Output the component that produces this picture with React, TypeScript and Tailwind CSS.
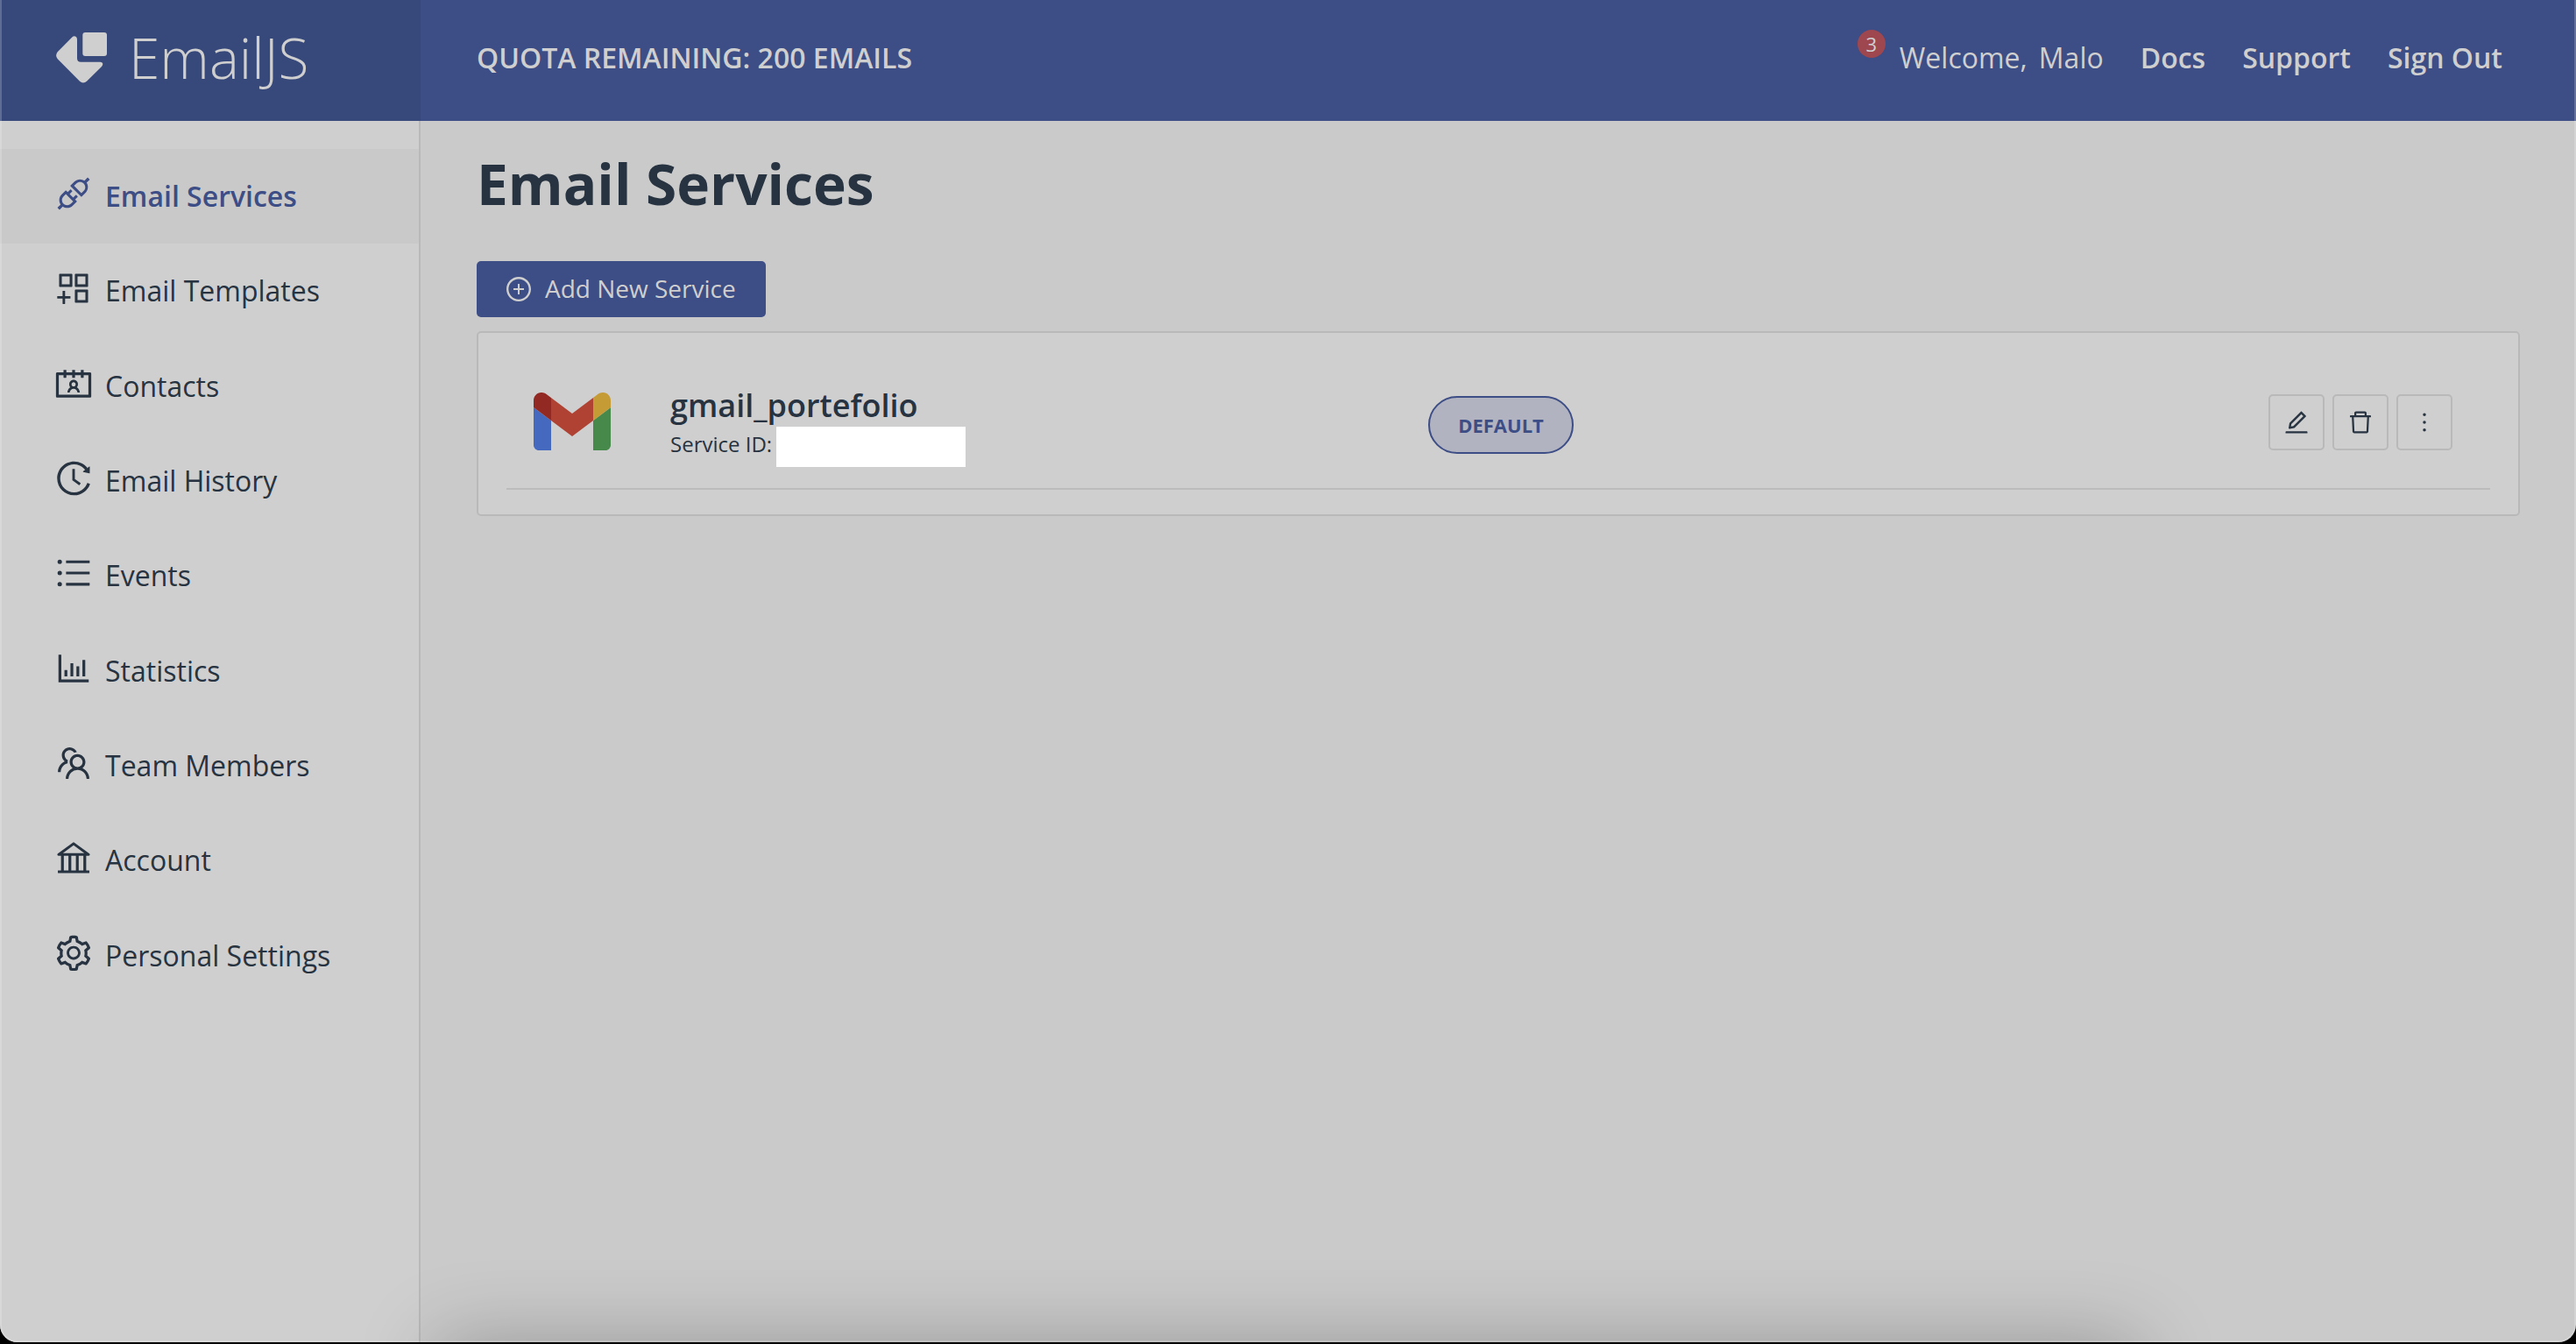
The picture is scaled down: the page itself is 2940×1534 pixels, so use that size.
import React from "react";
import type { IconType } from "react-icons";
import {
  AiOutlineApi,
  AiOutlineAppstoreAdd,
  AiOutlineBank,
  AiOutlineBarChart,
  AiOutlineContacts,
  AiOutlineDelete,
  AiOutlineEdit,
  AiOutlineHistory,
  AiOutlineMore,
  AiOutlinePlusCircle,
  AiOutlineSetting,
  AiOutlineTeam,
  AiOutlineUnorderedList,
} from "react-icons/ai";

const navItems: { label: string; Icon: IconType }[] = [
  { label: "Email Services", Icon: AiOutlineApi },
  { label: "Email Templates", Icon: AiOutlineAppstoreAdd },
  { label: "Contacts", Icon: AiOutlineContacts },
  { label: "Email History", Icon: AiOutlineHistory },
  { label: "Events", Icon: AiOutlineUnorderedList },
  { label: "Statistics", Icon: AiOutlineBarChart },
  { label: "Team Members", Icon: AiOutlineTeam },
  { label: "Account", Icon: AiOutlineBank },
  { label: "Personal Settings", Icon: AiOutlineSetting },
];

function Logo() {
  return (
    <svg viewBox="0 0 58 58" className="size-[58px] shrink-0" fill="#cfcfcf" aria-hidden="true">
      <rect x="30.300" y="0" width="27.700" height="27" rx="3" />
      <path d="M18.500 5.300Q20.500 3.700 22.500 4.800Q24 5.800 24 8V29.500Q24 33.700 28.200 33.700H50.500Q52.800 33.700 53.300 35.700Q53.500 37.500 52 39L35 55.800Q31 59.300 27 55.800L1.700 30.300Q-1.500 26.300 1.700 22.300Z" />
    </svg>
  );
}

function GmailLogo() {
  return (
    <svg viewBox="0 0 88 66" className="mb-0.5 h-[66px] w-[88px] shrink-0" aria-label="Gmail" role="img">
      <path fill="#4469be" d="M6 66h14V32L0 17v43c0 3.320 2.690 6 6 6" />
      <path fill="#47894b" d="M68 66h14c3.320 0 6-2.690 6-6V17L68 32" />
      <path fill="#c49b35" d="M68 6v26l20-15V9c0-7.420-8.470-11.650-14.400-7.200" />
      <path fill="#b04234" d="M20 32V6l24 18L68 6v26L44 50" />
      <path fill="#922922" d="M0 9v8l20 15V6l-5.600-4.200C8.470-2.650 0 1.580 0 9" />
    </svg>
  );
}

function ActionButton({ label, Icon }: { label: string; Icon: IconType }) {
  return (
    <button
      type="button"
      aria-label={label}
      className="flex size-16 items-center justify-center rounded-[5px] border-2 border-[#b9b9b9]"
    >
      <Icon className="size-8 shrink-0" aria-hidden="true" />
    </button>
  );
}

export default function App() {
  return (
    <div className="min-h-screen bg-black pb-[2px] font-['Open_Sans',sans-serif] text-[32px] leading-[44px] text-[#273340]">
      <div className="relative flex min-h-[calc(100vh-2px)] flex-col overflow-hidden rounded-b-[20px] bg-[#cacaca]">
        <header className="flex h-[138px] bg-[#3d4d85] text-[#cfcfcf]">
          <a href="#" className="flex w-[480px] shrink-0 items-center gap-[25px] bg-[#37487b] pb-1.5 pl-16">
            <Logo />
            <span className="text-[64px] leading-[88px] font-light">EmailJS</span>
          </a>
          <div className="flex flex-1 items-center justify-between pr-[84px] pb-1.5 pl-16">
            <p className="font-semibold">QUOTA REMAINING: 200 EMAILS</p>
            <nav className="flex items-center gap-[42px] font-semibold">
              <a href="#" className="relative flex gap-[13px] font-normal">
                <span className="absolute -top-2.5 right-full mr-4 flex size-8 items-center justify-center rounded-full bg-[#9e474e] text-[22px]">
                  3
                </span>
                <span>Welcome,</span>
                <span>Malo</span>
              </a>
              <a href="#">Docs</a>
              <a href="#">Support</a>
              <a href="#">Sign Out</a>
            </nav>
          </div>
        </header>

        <div className="flex flex-1">
          <aside className="w-[480px] shrink-0 border-r-2 border-[#b9b9b9] bg-[#cfcfcf] pt-8">
            <nav className="grid h-[975px] grid-rows-9">
              {navItems.map(({ label, Icon }, i) => (
                <a
                  key={label}
                  href="#"
                  className={
                    i === 0
                      ? "flex items-center gap-[13px] bg-[#c9c9c9] pl-[61px] font-semibold text-[#3d4d85]"
                      : "flex items-center gap-[13px] pl-[61px]"
                  }
                >
                  <Icon className="mb-1.5 size-[46px] shrink-0" aria-hidden="true" />
                  <span>{label}</span>
                </a>
              ))}
            </nav>
          </aside>

          <main className="flex-1 px-16 pt-7">
            <h1 className="text-[64px] leading-[88px] font-bold">Email Services</h1>
            <button
              type="button"
              className="mt-11 flex h-16 items-center gap-3.5 rounded-[5px] bg-[#3d4d85] pr-[34px] pl-8 text-[28px] text-[#cfcfcf]"
            >
              <AiOutlinePlusCircle className="size-8 shrink-0" aria-hidden="true" />
              <span className="pb-0.5">Add New Service</span>
            </button>

            <section className="mt-4 h-[211px] rounded-[5px] border-2 border-[#b9b9b9] bg-[#cfcfcf] px-8">
              <div className="flex h-[179px] items-center border-b-2 border-[#bcbcbc] pt-[26px] pr-[43px] pl-[31px]">
                <GmailLogo />
                <div className="ml-[68px] w-[865px] pt-2">
                  <h2 className="text-4xl leading-[48px] font-semibold">gmail_portefolio</h2>
                  <p className="flex items-start gap-[5px] text-2xl leading-10">
                    Service ID:
                    <span className="h-[46px] w-[216px] bg-white" />
                  </p>
                </div>
                <span className="mt-1.5 flex h-[66px] w-[166px] items-center justify-center rounded-full border-2 border-[#3d4d85] bg-[#b1b3c0] text-[22px] font-bold text-[#3d4d85]">
                  DEFAULT
                </span>
                <div className="ml-auto flex gap-[9px]">
                  <ActionButton label="Edit service" Icon={AiOutlineEdit} />
                  <ActionButton label="Delete service" Icon={AiOutlineDelete} />
                  <ActionButton label="More actions" Icon={AiOutlineMore} />
                </div>
              </div>
            </section>
          </main>
        </div>

        <div className="pointer-events-none absolute right-[500px] -bottom-24 left-[500px] h-24 shadow-[0_0_90px_0_rgba(0,0,0,0.26)]" />
        <div className="pointer-events-none absolute inset-0 rounded-b-[20px] border-2 border-t-0 border-white/20" />
      </div>
    </div>
  );
}
